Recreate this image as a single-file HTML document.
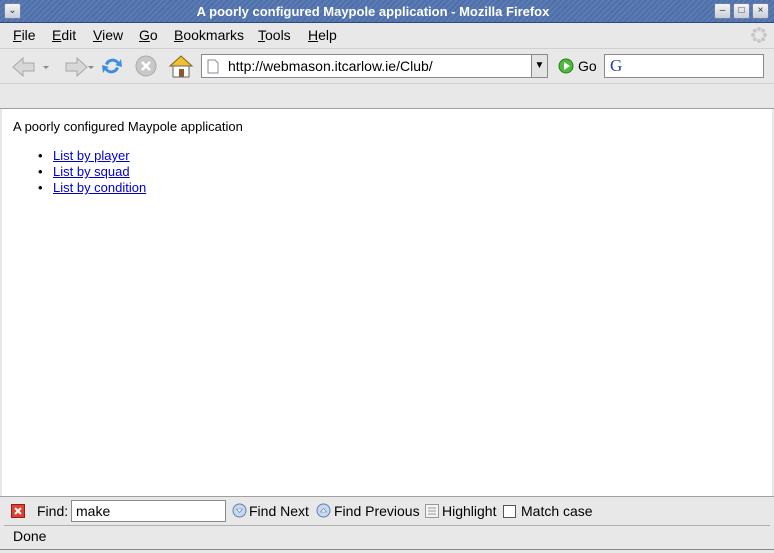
<!DOCTYPE html>
<html><head><style>
*{margin:0;padding:0;box-sizing:border-box}
body{width:774px;height:553px;background:#e8e8e8;font-family:"Liberation Sans",sans-serif;font-size:14px;color:#000;position:relative;overflow:hidden}
.a{position:absolute}
#title{left:0;top:0;width:774px;height:23px;background:repeating-linear-gradient(135deg,#4f6fa8 0 2px,#5b7bb5 2px 4px);border-bottom:1px solid #2c4a80}
#title .t{left:0;width:746px;top:4px;text-align:center;color:#fff;font-weight:bold;font-size:13px}
.wb{top:3px;width:17px;height:16px;background:linear-gradient(#f4f4f4,#c8cdd8);border:1px solid #6e7ea0;border-radius:2px;font-size:10px;text-align:center;line-height:14px;color:#334}
.menu span{position:absolute;top:27px;font-size:14px}
u{text-decoration:underline}
.field{background:#fff;border:1px solid #8a8a8a}
a{color:#00c;text-decoration:underline}
</style></head><body>
<div id="title" class="a"><div class="t a">A poorly configured Maypole application - Mozilla Firefox</div></div>
<div class="a wb" style="left:4px">&#8964;</div>
<div class="a wb" style="left:714px">&#8211;</div>
<div class="a wb" style="left:733px">&#9633;</div>
<div class="a wb" style="left:752px">&#215;</div>
<div class="menu">
<span style="left:13px"><u>F</u>ile</span><span style="left:52px"><u>E</u>dit</span><span style="left:93px"><u>V</u>iew</span><span style="left:139px"><u>G</u>o</span><span style="left:174px"><u>B</u>ookmarks</span><span style="left:258px"><u>T</u>ools</span><span style="left:308px"><u>H</u>elp</span>
</div>
<svg class="a" style="left:750px;top:26px" width="18" height="18"><g fill="#c8c8c8"><circle cx="9" cy="3" r="2"/><circle cx="9" cy="15" r="2"/><circle cx="3" cy="9" r="2"/><circle cx="15" cy="9" r="2"/><circle cx="4.8" cy="4.8" r="2"/><circle cx="13.2" cy="13.2" r="2"/><circle cx="13.2" cy="4.8" r="2"/><circle cx="4.8" cy="13.2" r="2"/></g></svg>
<div class="a" style="left:0;top:48px;width:774px;height:1px;background:#d0d0d0"></div>
<svg class="a" style="left:10px;top:54px" width="185" height="26">
<path d="M3 13 L13 4 V9 H24 V17 H13 V22 Z" fill="#d8d8d8" stroke="#a8a8a8"/>
<path d="M33 12 l3 3 l3-3z" fill="#888"/>
<path d="M77 13 L67 4 V9 H56 V17 H67 V22 Z" fill="#d8d8d8" stroke="#a8a8a8"/>
<path d="M78 12 l3 3 l3-3z" fill="#888"/>
<path d="M95 10 A8 8 0 0 1 109 8 L111 5 L112 13 L105 11 L107 10 A5 5 0 0 0 98 11Z" fill="#3b8ee0"/>
<path d="M109 14 A8 8 0 0 1 95 16 L93 19 L92 11 L99 13 L97 14 A5 5 0 0 0 106 13Z" fill="#3b8ee0"/>
<circle cx="136" cy="12" r="10" fill="#c8c8c8" stroke="#aaa"/><path d="M132 8 l8 8 M140 8 l-8 8" stroke="#fff" stroke-width="2.5"/>
<path d="M160 12 L171 2 L182 12 Z" fill="#f0c030" stroke="#806020"/><rect x="163" y="12" width="16" height="11" fill="#fff" stroke="#666"/><rect x="169" y="15" width="5" height="8" fill="#8a5a2a"/>
</svg>
<div class="a field" style="left:201px;top:54px;width:331px;height:24px"></div>
<svg class="a" style="left:207px;top:59px" width="12" height="15"><path d="M1 1 H8 L11 4 V14 H1 Z" fill="#fff" stroke="#889"/></svg>
<div class="a" style="left:228px;top:58px;font-size:14px">http://webmason.itcarlow.ie/Club/</div>
<div class="a" style="left:531px;top:54px;width:17px;height:24px;background:#e4e4e4;border:1px solid #8a8a8a;text-align:center;font-size:10px;line-height:22px">&#9660;</div>
<svg class="a" style="left:558px;top:58px" width="16" height="16"><circle cx="8" cy="8" r="7" fill="#4cbb3a" stroke="#2a7a20"/><path d="M6 4 L12 8 L6 12Z" fill="#fff"/></svg>
<div class="a" style="left:578px;top:58px;font-size:14px">Go</div>
<div class="a field" style="left:604px;top:54px;width:160px;height:24px"></div>
<div class="a" style="left:610px;top:56px;font-size:17px;color:#2040b0;font-family:'Liberation Serif',serif">G</div>
<div class="a" style="left:0;top:83px;width:774px;height:1px;background:#d0d0d0"></div>
<div class="a" style="left:0;top:108px;width:774px;height:1px;background:#a0a0a0"></div>
<div class="a" style="left:2px;top:109px;width:770px;height:387px;background:#fff"></div>
<div class="a" style="left:13px;top:119px;font-size:13px">A poorly configured Maypole application</div>
<div class="a" style="left:38px;top:148px;line-height:16px;font-size:13px">
<div><span style="display:inline-block;width:15px">&#8226;</span><a>List by player</a></div>
<div><span style="display:inline-block;width:15px">&#8226;</span><a>List by squad</a></div>
<div><span style="display:inline-block;width:15px">&#8226;</span><a>List by condition</a></div>
</div>
<div class="a" style="left:0;top:496px;width:774px;height:1px;background:#a0a0a0"></div>
<svg class="a" style="left:11px;top:504px" width="14" height="14"><rect x="0.5" y="0.5" width="13" height="13" fill="#e04030" stroke="#902018"/><path d="M4 4l6 6M10 4l-6 6" stroke="#fff" stroke-width="2"/></svg>
<div class="a" style="left:37px;top:503px;font-size:14px">Find:</div>
<div class="a field" style="left:71px;top:500px;width:155px;height:22px;padding:2px 4px;font-size:14px">make</div>
<svg class="a" style="left:232px;top:503px" width="15" height="15"><circle cx="7.5" cy="7.5" r="6.5" fill="#c8d8f0" stroke="#6080b0"/><path d="M4.5 6 h6 l-3 3.5z" fill="#fff" stroke="#6080b0" stroke-width=".6"/></svg>
<div class="a" style="left:249px;top:503px;font-size:14px">Find Next</div>
<svg class="a" style="left:316px;top:503px" width="15" height="15"><circle cx="7.5" cy="7.5" r="6.5" fill="#c8d8f0" stroke="#6080b0"/><path d="M4.5 9 h6 l-3-3.5z" fill="#fff" stroke="#6080b0" stroke-width=".6"/></svg>
<div class="a" style="left:334px;top:503px;font-size:14px">Find Previous</div>
<svg class="a" style="left:425px;top:504px" width="14" height="14"><rect x=".5" y=".5" width="13" height="13" fill="#f4f4f4" stroke="#999"/><path d="M3 4h8M3 7h8M3 10h8" stroke="#999"/></svg>
<div class="a" style="left:442px;top:503px;font-size:14px">Highlight</div>
<div class="a" style="left:503px;top:505px;width:13px;height:13px;background:#fff;border:1px solid #555"></div>
<div class="a" style="left:521px;top:503px;font-size:14px">Match case</div>
<div class="a" style="left:4px;top:525px;width:766px;height:1px;background:#b0b0b0"></div>
<div class="a" style="left:13px;top:528px;font-size:14px">Done</div>
<div class="a" style="left:0;top:549px;width:774px;height:4px;border-top:1px solid #888"></div>
</body></html>
